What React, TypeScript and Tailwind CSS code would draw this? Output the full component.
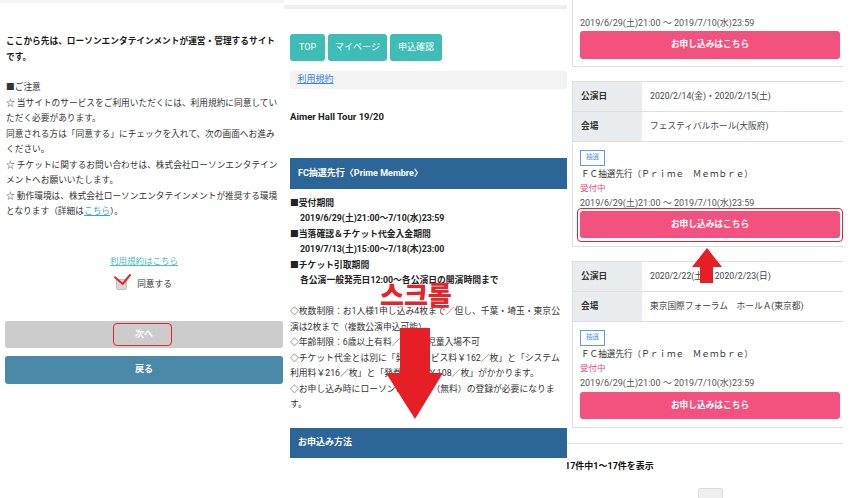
const navButtons = [
  { label: "TOP", w: "w-[35px]" },
  { label: "マイページ", w: "w-[59px]" },
  { label: "申込確認", w: "w-[52px]" },
]

function ConsentPanel() {
  return (
    <div className="w-[284px] shrink-0 flex flex-col">
      <div className="h-[3px] bg-[#f5f5f5]" />
      <div className="ml-[6px] w-[276px] pt-[30px] text-[8.7px]">
        <p className="font-bold text-[#1a1a1a] leading-[16px]">
          ここから先は、ローソンエンタテインメントが運営・管理するサイトです。
        </p>
        <p className="mt-[15px] leading-[15.5px]">
          ■ご注意
          <br />
          ☆ 当サイトのサービスをご利用いただくには、利用規約に同意していただく必要があります。
          <br />
          同意される方は「同意する」にチェックを入れて、次の画面へお進みください。
          <br />
          ☆ チケットに関するお問い合わせは、株式会社ローソンエンタテインメントへお願いいたします。
          <br />
          ☆ 動作環境は、株式会社ローソンエンタテインメントが推奨する環境となります（詳細は
          <a className="text-[#3aa9b9] underline">こちら</a>）。
        </p>
      </div>

      <div className="mt-[34.5px] ml-[5px] w-[278px] text-center text-[8.5px] leading-[15.5px]">
        <a className="text-[#4fb9c8] underline">利用規約はこちら</a>
      </div>
      <div className="mt-[6.75px] ml-[5px] w-[278px] h-[16px] flex items-center justify-center gap-[10px]">
        <span className="w-[11px] h-[11px] rounded-[2px] bg-[#d6d6d6] border border-[#c0c0c0]" />
        <span className="text-[8.7px] text-[#333]">同意する</span>
      </div>

      <button className="mt-[28.5px] ml-[5px] w-[278px] h-[27px] rounded-[3px] bg-[#cccccc] text-white text-[9px] font-bold">
        次へ
      </button>
      <button className="mt-[8px] ml-[5px] w-[278px] h-[28px] rounded-[3px] bg-[#4a89a8] text-white text-[9px] font-bold">
        戻る
      </button>
    </div>
  )
}

function InfoPanel() {
  return (
    <div className="w-[283px] shrink-0 flex flex-col">
      <div className="mt-[5px] h-[4px] bg-[#efefef]" />
      <div className="pl-[6px]">
        <div className="mt-[25px] flex gap-[3px]">
          {navButtons.map((b) => (
            <div
              key={b.label}
              className={`${b.w} h-[27px] rounded-[3px] bg-[#3dbdb5] text-white text-[9px] flex items-center justify-center`}
            >
              {b.label}
            </div>
          ))}
        </div>

        <div className="mt-[10px] h-[18px] rounded-[3px] bg-[#f3f3f3] pl-[7.5px] flex items-center">
          <a className="text-[9px] text-[#3d84e6] underline">利用規約</a>
        </div>

        <p className="mt-[20px] leading-[16px] text-[9.5px] font-bold text-[#222]">Aimer Hall Tour 19/20</p>

        <div className="mt-[33px] h-[31px] bg-[#2c6698] pl-[8px] flex items-center text-white text-[9px] font-bold">
          FC抽選先行〈Prime Membre〉
        </div>

        <div className="mt-[6.5px] text-[8.8px] leading-[15.5px] text-[#333]">
          <div className="font-bold text-[#222]">
            <p>■受付期間</p>
            <p className="pl-[10px]">2019/6/29(土)21:00〜7/10(水)23:59</p>
            <p>■当落確認＆チケット代金入金期間</p>
            <p className="pl-[10px]">2019/7/13(土)15:00〜7/18(木)23:00</p>
            <p>■チケット引取期間</p>
            <p className="pl-[10px]">各公演一般発売日12:00〜各公演日の開演時間まで</p>
          </div>
          <p className="mt-[15.5px]">
            ◇枚数制限：お1人様1申し込み4枚まで／但し、千葉・埼玉・東京公演は2枚まで（複数公演申込可能）
            <br />
            ◇年齢制限：6歳以上有料／未就学児童入場不可
            <br />
            ◇チケット代金とは別に「発券サービス料￥162／枚」と「システム利用料￥216／枚」と「発券手数料￥108／枚」がかかります。
            <br />
            ◇お申し込み時にローソンWEB会員（無料）の登録が必要になります。
          </p>
        </div>

        <div className="mt-[15px] h-[30px] bg-[#2c6698] pl-[8px] flex items-center text-white text-[9px] font-bold">
          お申込み方法
        </div>
      </div>
    </div>
  )
}

function PinkButton() {
  return (
    <div className="w-[260px] h-[27px] rounded-[3px] bg-[#f3527f] text-white text-[8.7px] font-bold flex items-center justify-center">
      お申し込みはこちら
    </div>
  )
}

function EventTable({ date, venue }: { date: string; venue: string }) {
  const rows = [
    ["公演日", date],
    ["会場", venue],
  ]
  return (
    <div className="border-l border-t border-[#dedede]">
      {rows.map(([label, value]) => (
        <div key={label} className="flex h-[30px] border-b border-[#dedede] text-[8.7px]">
          <div className="w-[69px] bg-[#e9edef] pl-[8px] flex items-center font-bold text-[#333]">{label}</div>
          <div className="pl-[8px] flex items-center text-[#444]">{value}</div>
        </div>
      ))}
    </div>
  )
}

function LotteryCard() {
  return (
    <div className="border-l border-b border-[#e0e0e0] pl-[7px] pt-[8px] pb-[8px]">
      <div className="w-[25px] h-[16px] border border-[#5a9cf0] text-[#4a90e8] text-[6.5px] flex items-center justify-center">
        抽選
      </div>
      <p className="mt-[1px] pl-[1px] leading-[14px] text-[8.6px] text-[#333]">ＦＣ抽選先行（Ｐｒｉｍｅ　Ｍｅｍｂｒｅ）</p>
      <p className="leading-[14px] text-[8.5px] text-[#ec4a7e]">受付中</p>
      <p className="leading-[16px] text-[9px] text-[#555]">2019/6/29(土)21:00 〜 2019/7/10(水)23:59</p>
      <div className="mt-[0.5px]">
        <PinkButton />
      </div>
    </div>
  )
}

function ListPanel() {
  return (
    <div className="w-[276px] shrink-0 overflow-hidden">
      <div className="pl-[5px] w-[290px]">
        <div className="border-l border-b border-[#e0e0e0] pl-[7px] pt-[14.7px] pb-[7px]">
          <p className="leading-[16px] text-[9px] text-[#555]">2019/6/29(土)21:00 〜 2019/7/10(水)23:59</p>
          <div className="h-[28px] flex">
            <div className="w-[260px] rounded-[3px] bg-[#f3527f] text-white text-[8.7px] font-bold flex items-center justify-center">
              お申し込みはこちら
            </div>
          </div>
        </div>

        <div className="mt-[14px]">
          <EventTable date="2020/2/14(金)・2020/2/15(土)" venue="フェスティバルホール(大阪府)" />
          <LotteryCard />
        </div>

        <div className="mt-[14px]">
          <EventTable date="2020/2/22(土)・2020/2/23(日)" venue="東京国際フォーラム　ホールＡ(東京都)" />
          <LotteryCard />
        </div>
      </div>

      <div className="mt-[15px] border-t border-[#e2e2e2]" />
      <p className="mt-[14px] -ml-[2px] leading-[16px] text-[9px] font-bold text-[#111]">17件中1〜17件を表示</p>
      <div className="mt-[14px] ml-[131px] w-[25px] h-[24px] rounded-[2px] bg-[#efefef] border border-[#dcdcdc] flex items-end justify-center text-[9px] text-[#333]">
        1
      </div>
    </div>
  )
}

export default function App() {
  return (
    <div className="relative flex w-[850px] h-[498px] overflow-hidden bg-white font-['Roboto','Noto_Sans_CJK_JP',sans-serif] text-[#333]">
      <ConsentPanel />
      <InfoPanel />
      <ListPanel />

      {/* red annotations drawn over the screenshots */}
      <svg className="absolute left-[112px] top-[272px]" width="22" height="16">
        <polyline points="3,5.3 10.7,12 18,3" fill="none" stroke="#e8242b" strokeWidth="2" strokeLinecap="round" strokeLinejoin="round" />
      </svg>
      <div className="absolute left-[113px] top-[323px] w-[59px] h-[23px] rounded-[4px] border-[1.5px] border-[#e8242b]" />

      <div className="absolute left-[380px] top-[281px] text-[26px] leading-none font-black text-[#e8242b] font-['Noto_Sans_CJK_KR',sans-serif]">
        스크롤
      </div>
      <svg className="absolute left-[386px] top-[328px]" width="57" height="91">
        <polygon points="14,0 44,0 44,45 57,45 29,91 0,45 14,45" fill="#e61e26" />
      </svg>

      <div className="absolute left-[577px] top-[208px] w-[266px] h-[34px] rounded-[4px] border-[1.5px] border-[#e8242b]" />
      <svg className="absolute left-[692px] top-[248px]" width="30" height="35">
        <polygon points="15,0 30,19 21,19 21,35 8,35 8,19 0,19" fill="#e61e26" />
      </svg>
    </div>
  )
}
